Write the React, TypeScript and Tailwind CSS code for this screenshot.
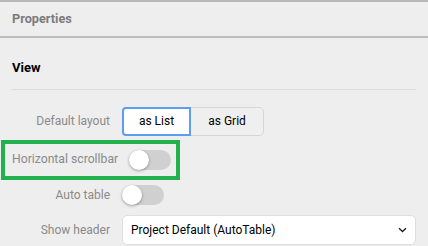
import React from "react";

function Toggle() {
  return (
    <div className="relative w-[42px] h-[20px] rounded-full bg-[#d0d0d0]">
      <div className="absolute left-0 top-0 w-[20px] h-[20px] rounded-full bg-white shadow-[0_1px_3px_rgba(0,0,0,0.35)]" />
    </div>
  );
}

export default function App() {
  return (
    <div
      className="w-[428px] h-[246px] overflow-hidden bg-[#eeeeee] border-t-2 border-[#b8b8b8] text-[12px]"
      style={{ fontFamily: "Roboto, 'Liberation Sans', sans-serif" }}
    >
      <div className="h-[36px] border-b-2 border-[#bcbcbc] px-3 flex items-center">
        <span className="font-bold text-[12.7px] text-[#7c7c7c]">Properties</span>
      </div>
      <div className="mx-3 pt-[20px] pb-[11px] border-b border-[#dcdcdc]">
        <span className="font-bold text-[13px] text-black">View</span>
      </div>
      <div className="flex items-center gap-3 mt-[17px]">
        <div className="w-[110px] text-right text-[#8a8a8a]">Default layout</div>
        <div className="flex">
          <div className="w-[69px] h-[29px] flex items-center justify-center bg-white border-2 border-[#5e9cf2] rounded-l-[4px] text-black">
            as List
          </div>
          <div className="w-[73px] h-[29px] flex items-center justify-center bg-[#efefef] border border-l-0 border-[#d6d6d6] rounded-r-[5px] text-black">
            as Grid
          </div>
        </div>
      </div>
      <div className="ml-[1px] mt-[4px] w-[179px] h-[40px] border-4 border-[#22b14c] flex items-center pl-[7px] gap-[11px]">
        <div className="text-[#8a8a8a] whitespace-nowrap text-[12.2px]">Horizontal scrollbar</div>
        <Toggle />
      </div>
      <div className="flex items-center gap-3 mt-[5px] h-[20px]">
        <div className="w-[110px] text-right text-[#8a8a8a]">Auto table</div>
        <Toggle />
      </div>
      <div className="flex items-center gap-3 mt-[10px]">
        <div className="w-[110px] text-right text-[#8a8a8a]">Show header</div>
        <div className="w-[294px] h-[30px] bg-white border border-[#dedede] rounded-[5px] flex items-center justify-between pl-[8px] pr-[8px] text-black">
          <span>Project Default (AutoTable)</span>
          <svg width="9" height="6" viewBox="0 0 9 6" fill="none">
            <path d="M1 1.2 L4.5 4.6 L8 1.2" stroke="#222" strokeWidth="1.4" />
          </svg>
        </div>
      </div>
    </div>
  );
}
